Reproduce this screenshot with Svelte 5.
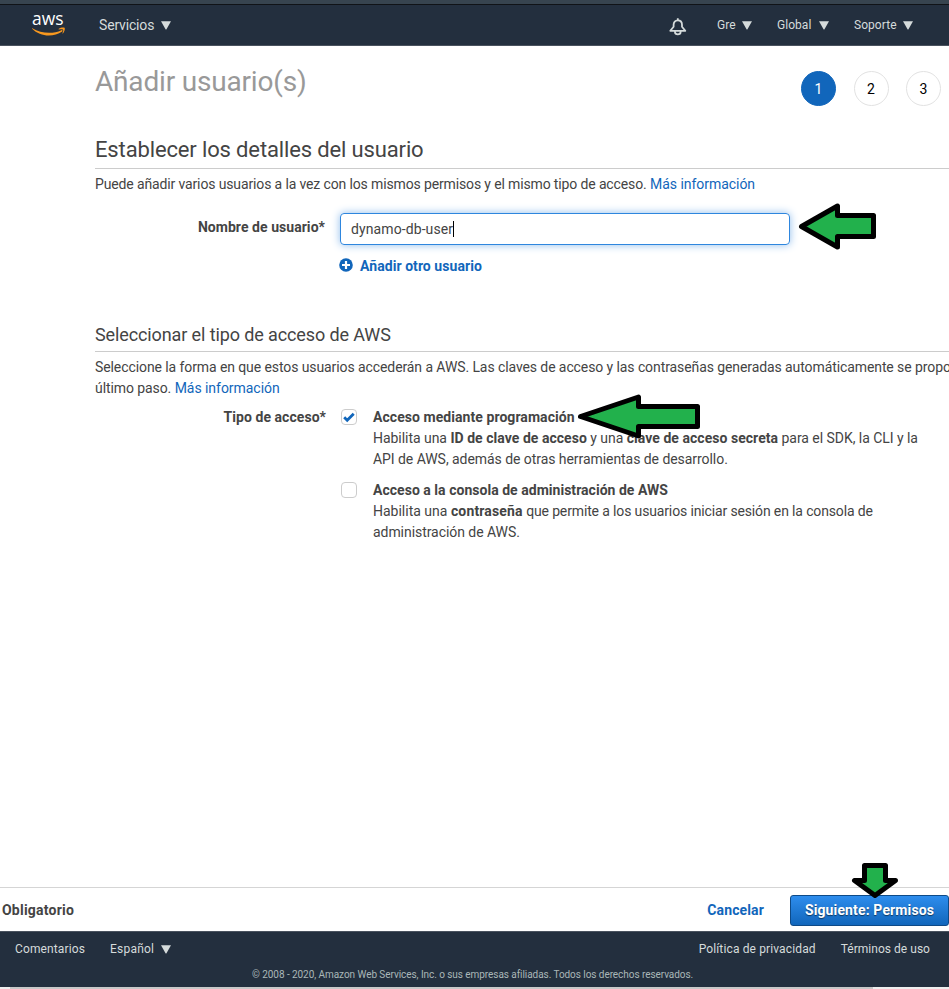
<script>
  const menus = [
    { label: 'Gre', width: 60 },
    { label: 'Global', width: 77 },
    { label: 'Soporte', width: 72 },
  ];
  const steps = [1, 2, 3];
</script>

{#snippet caret()}
  <svg class="caret" width="10" height="9" viewBox="0 0 10 9"><path d="M0 0.3H10L5.5 8.2Q5 9 4.5 8.2Z" fill="#d5dbdb" /></svg>
{/snippet}

<div class="page">
  <div class="strip"></div>
  <header>
    <svg class="logo" width="34" height="22" viewBox="0 0 34 22">
      <text x="0" y="11" textLength="31.5" lengthAdjust="spacingAndGlyphs" fill="#fff">aws</text>
      <path d="M0.3 14.2C9 19.6 21 20.2 29.4 16.2C30.3 15.8 31 16.8 30.2 17.5C21 23.8 7.8 22.6 0.1 14.8C-0.2 14.4 0 14 0.3 14.2Z" fill="#f7981f" />
      <path d="M26.8 14.7C28.4 13.3 31.8 13.1 32.6 13.8C33.3 14.7 32.5 18 30.9 19.4C30.5 19.7 30.3 19.5 30.5 19.1C31.1 17.7 31.5 16.3 31.1 15.8C30.6 15.2 28.8 15.2 27.1 15.4C26.6 15.4 26.5 15 26.8 14.7Z" fill="#f7981f" />
    </svg>
    <div class="services"><span>Servicios</span>{@render caret()}</div>
    <svg class="bell" width="18" height="18" viewBox="0 0 18 18" fill="none" stroke="#d5dbdb" stroke-width="1.8">
      <path d="M1.3 12.8L4.6 8.8V6.8C4.6 4.1 6.1 2.3 8.8 2.3S13 4.1 13 6.8V8.8L16.3 12.8Z" stroke-linejoin="round" />
      <path d="M8.8 0.3V2M6 13V14Q6 16.3 8.8 16.3T11.6 14V13" />
    </svg>
    <nav>
      {#each menus as menu}
        <div class="menu" style:width="{menu.width}px"><span>{menu.label}</span>{@render caret()}</div>
      {/each}
    </nav>
  </header>

  <main>
    <div class="heading">
      <h1>Añadir usuario(s)</h1>
      <ol>
        {#each steps as step}
          <li class:active={step === 1}>{step}</li>
        {/each}
      </ol>
    </div>

    <h2>Establecer los detalles del usuario</h2>
    <p class="intro"><span class="intro-text">Puede añadir varios usuarios a la vez con los mismos permisos y el mismo tipo de acceso.</span> <a href="#info">Más información</a></p>

    <div class="row name-row">
      <div class="label">Nombre de usuario*</div>
      <div class="field">
        <div class="input">dynamo-db-user<i></i></div>
        <div class="add">
          <svg width="14" height="14" viewBox="0 0 14 14"><circle cx="7" cy="7" r="6.8" fill="#1166bb" /><path d="M7 3V11M3 7H11" stroke="#fff" stroke-width="2.2" /></svg>
          <b>Añadir otro usuario</b>
        </div>
      </div>
    </div>

    <h3>Seleccionar el tipo de acceso de AWS</h3>
    <p class="access-text"><span class="wide">Seleccione la forma en que estos usuarios accederán a AWS. Las claves de acceso y las contraseñas generadas automáticamente se propo</span><br /><span class="wide">último paso.</span> <a href="#info">Más información</a></p>

    <div class="row type-row">
      <div class="label">Tipo de acceso*</div>
      <div class="options">
        <div class="option">
          <div class="check"><svg width="14" height="14" viewBox="0 0 14 14"><path d="M2.2 7.2L5.2 10.2L11.7 3.7" fill="none" stroke="#1166bb" stroke-width="2.8" /></svg></div>
          <div class="copy">
            <b>Acceso mediante programación</b><br />
            <span class="l1">Habilita una <b>ID de clave de acceso</b> y una <b>clave de acceso secreta</b> para el SDK, la CLI y la</span><br />
            <span class="l2">API de AWS, además de otras herramientas de desarrollo.</span>
          </div>
        </div>
        <div class="option">
          <div class="check"></div>
          <div class="copy">
            <b class="second">Acceso a la consola de administración de AWS</b><br />
            <span>Habilita una <b class="password">contraseña</b> <span class="l3">que permite a los usuarios iniciar sesión en la consola de</span></span><br />
            <span class="l2">administración de AWS.</span>
          </div>
        </div>
      </div>
    </div>
  </main>

  <div class="actions">
    <b class="required">Obligatorio</b>
    <b class="cancel">Cancelar</b>
    <button>Siguiente: Permisos</button>
  </div>

  <footer>
    <div class="links">
      <span class="comments">Comentarios</span>
      <span class="lang">Español</span>{@render caret()}
      <span class="privacy">Política de privacidad</span>
      <span class="terms">Términos de uso</span>
    </div>
    <div class="legal"><span>© 2008 - 2020, Amazon Web Services, Inc. o sus empresas afiliadas. Todos los derechos reservados.</span></div>
  </footer>
  <div class="scroll"><div></div></div>

  <svg class="arrows" width="949" height="989" viewBox="0 0 949 989" fill="#22b14c" stroke="#000" stroke-width="5" stroke-linejoin="round">
    <path d="M801.5 226.5L837.5 206V215.5H873.5V236.5H837.5V247L801.5 226.5Z" />
    <path d="M580.5 416.5L638.5 397V406.5H697.5V426.5H638.5V436Z" />
    <path d="M864.5 865.5H885.5V880.5H895.5L875 895.5L854.5 880.5H864.5Z" />
  </svg>
</div>

<style>
  :global(body) { margin: 0; }
  * { box-sizing: border-box; }
  .page { position: relative; width: 949px; height: 989px; overflow: hidden; display: flex; flex-direction: column; background: #fff; color: #444; font: 14px/21px Roboto, sans-serif; white-space: nowrap; }
  b { letter-spacing: .06px; }
  .strip { height: 5px; background: #37444f; border-bottom: 1px solid #101317; flex: none; }
  header { height: 41px; flex: none; display: flex; align-items: center; background: #232f3e; border-bottom: 1px solid #49525e; color: #d5dbdb; font-size: 12px; }
  .logo { margin-left: 32px; margin-top: -1px; overflow: visible; }
  .logo text { font: 500 17.5px "Open Sans", sans-serif; }
  .services { display: flex; align-items: center; width: 570px; margin-left: 33px; font-size: 14px; letter-spacing: -.17px; }
  .caret { flex: none; }
  .services .caret { margin-left: 7px; }
  .bell { margin-top: 3px; }
  nav { display: flex; margin-left: 30px; }
  .menu { display: flex; align-items: center; }
  .menu .caret { margin-left: 6px; }
  .menu:nth-child(2) .caret { margin-left: 8px; }
  .menu span { letter-spacing: .05px; }
  main { flex: 1; padding-left: 95px; }
  .heading { height: 90px; display: flex; justify-content: space-between; padding: 19px 8px 0 0; }
  h1, h2, h3, p, ol { margin: 0; padding: 0; font-weight: 400; }
  h1 { font-size: 28px; line-height: 34px; color: #999; letter-spacing: -.18px; }
  ol { display: flex; gap: 17.5px; list-style: none; padding-top: 6px; }
  li { width: 35px; height: 35px; border: 1px solid #e2e2e2; border-radius: 50%; text-align: center; line-height: 34px; color: #000; }
  li.active { background: #1166bb; border-color: #1166bb; color: #fff; }
  h2 { height: 33px; line-height: 27px; font-size: 22px; border-bottom: 1px solid #ccc; letter-spacing: -.14px; }
  .intro { padding-top: 5px; height: 44px; }
  .intro-text { letter-spacing: -.135px; }
  a { color: #1166bb; text-decoration: none; letter-spacing: -.04px; }
  .row { display: flex; }
  .label { width: 231px; text-align: right; font-weight: 700; letter-spacing: .05px; }
  .name-row { height: 109px; }
  .name-row .label { padding: 4px 1px 0 0; }
  .field { margin-left: 14px; }
  .input { display: flex; align-items: center; width: 450px; height: 32px; padding-left: 10px; border: 1px solid #2e86de; border-radius: 4px; box-shadow: 0 0 8px #8fbdec; letter-spacing: .1px; }
  .input i { width: 1px; height: 16px; background: #000; }
  .add { display: flex; align-items: center; gap: 7px; margin-top: 11px; margin-left: -1px; color: #1166bb; }
  .add svg { margin-top: -3px; }
  h3 { height: 30px; line-height: 26px; font-size: 18px; border-bottom: 1px solid #ccc; letter-spacing: -.11px; }
  .access-text { padding-top: 5px; }
  .wide { letter-spacing: -.09px; }
  .type-row { margin-top: 8px; }
  .options { margin-left: 15px; }
  .option { display: flex; height: 73px; }
  .check { width: 16px; height: 16px; margin: 2px 16px 0 0; border: 1px solid #ccc; border-radius: 4px; }
  .check svg { display: block; }
  .second { letter-spacing: .03px; }
  .l1 { letter-spacing: -.04px; }
  .l1 b { letter-spacing: .04px; }
  .l2 { letter-spacing: -.055px; }
  .l3 { letter-spacing: -.14px; }
  .password { letter-spacing: .15px; }
  .actions { height: 44px; flex: none; display: flex; align-items: center; border-top: 1px solid #d5d5d5; padding: 2px 0 0 2px; }
  .required { letter-spacing: .22px; }
  .cancel { margin-left: auto; color: #1166bb; letter-spacing: .13px; }
  button { width: 159px; height: 31px; margin-left: 26px; padding: 0 0 1px; background: linear-gradient(#2e8ded, #1166bb); border: 1px solid #0e4a87; border-radius: 3px; font: 700 14px Roboto, sans-serif; letter-spacing: .13px; color: #fff; text-shadow: 0 1px 1px #0008; }
  footer { height: 56px; flex: none; background: #232f3e; border-top: 1px solid #49525e; color: #d5dbdb; }
  .links { display: flex; align-items: center; height: 35px; padding-left: 15px; font-size: 12px; letter-spacing: .13px; }
  .lang { margin-left: 25px; letter-spacing: .2px; }
  .links .caret { margin-left: 7px; }
  .privacy { margin-left: auto; }
  .terms { margin-left: 25px; margin-right: 19px; letter-spacing: .03px; }
  .legal { height: 18px; line-height: 16px; padding-left: 252px; font-size: 10px; letter-spacing: -.06px; color: #aab7b8; }
  .scroll { height: 2px; flex: none; background: #eee; padding-left: 10px; }
  .scroll div { width: 863px; height: 2px; background: #c8c8c8; }
  .arrows { position: absolute; inset: 0; pointer-events: none; }
</style>
